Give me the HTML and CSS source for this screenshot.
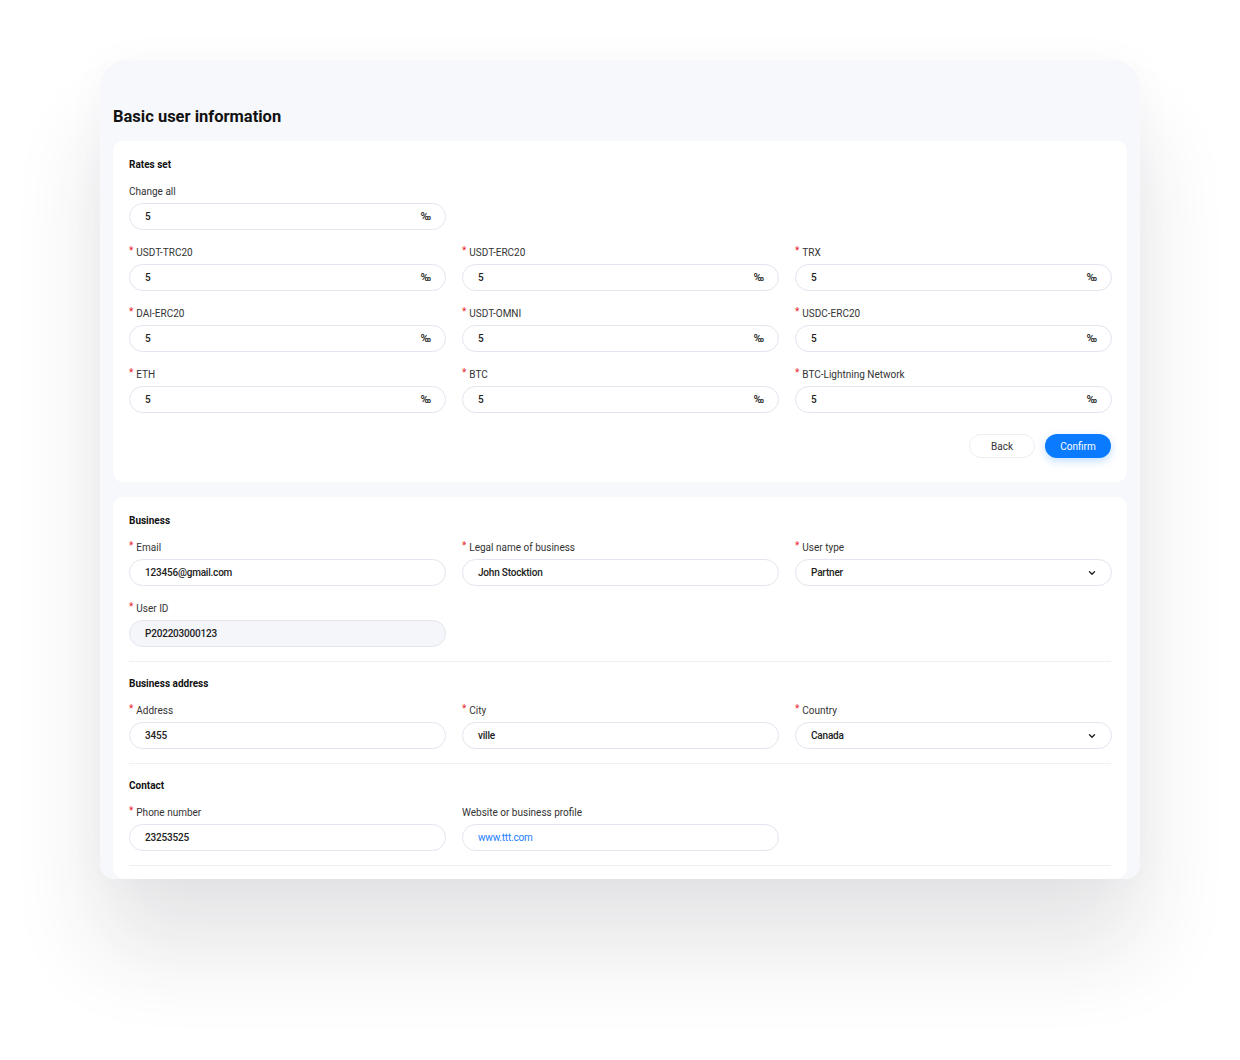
FILE: index.html
```html
<!DOCTYPE html>
<html lang="en">
<head>
<meta charset="utf-8">
<title>Basic user information</title>
<link rel="stylesheet" href="styles.css">
</head>
<body>
<div class="panel">
  <h1 class="page-title">Basic user information</h1>

  <section class="card card-rates">
    <h2 class="sec-title">Rates set</h2>
    <div class="grid">
      <div class="field">
        <label class="label">Change all</label>
        <div class="input"><span class="val">5</span><span class="unit">‰</span></div>
      </div>
    </div>
    <div class="grid grid-gap">
      <div class="field">
        <label class="label"><span class="req">*</span>USDT-TRC20</label>
        <div class="input"><span class="val">5</span><span class="unit">‰</span></div>
      </div>
      <div class="field">
        <label class="label"><span class="req">*</span>USDT-ERC20</label>
        <div class="input"><span class="val">5</span><span class="unit">‰</span></div>
      </div>
      <div class="field">
        <label class="label"><span class="req">*</span>TRX</label>
        <div class="input"><span class="val">5</span><span class="unit">‰</span></div>
      </div>
      <div class="field">
        <label class="label"><span class="req">*</span>DAI-ERC20</label>
        <div class="input"><span class="val">5</span><span class="unit">‰</span></div>
      </div>
      <div class="field">
        <label class="label"><span class="req">*</span>USDT-OMNI</label>
        <div class="input"><span class="val">5</span><span class="unit">‰</span></div>
      </div>
      <div class="field">
        <label class="label"><span class="req">*</span>USDC-ERC20</label>
        <div class="input"><span class="val">5</span><span class="unit">‰</span></div>
      </div>
      <div class="field">
        <label class="label"><span class="req">*</span>ETH</label>
        <div class="input"><span class="val">5</span><span class="unit">‰</span></div>
      </div>
      <div class="field">
        <label class="label"><span class="req">*</span>BTC</label>
        <div class="input"><span class="val">5</span><span class="unit">‰</span></div>
      </div>
      <div class="field">
        <label class="label"><span class="req">*</span>BTC-Lightning Network</label>
        <div class="input"><span class="val">5</span><span class="unit">‰</span></div>
      </div>
    </div>
    <div class="actions">
      <button class="btn btn-back">Back</button>
      <button class="btn btn-confirm">Confirm</button>
    </div>
  </section>

  <section class="card card-business">
    <h2 class="sec-title">Business</h2>
    <div class="grid">
      <div class="field">
        <label class="label"><span class="req">*</span>Email</label>
        <div class="input"><span class="val">123456@gmail.com</span></div>
      </div>
      <div class="field">
        <label class="label"><span class="req">*</span>Legal name of business</label>
        <div class="input"><span class="val">John Stocktion</span></div>
      </div>
      <div class="field">
        <label class="label"><span class="req">*</span>User type</label>
        <div class="input"><span class="val">Partner</span>
          <svg class="chev" width="8" height="6" viewBox="0 0 8 6"><path d="M1.5 1.8 L4 4.2 L6.5 1.8" fill="none" stroke="#222" stroke-width="1.4" stroke-linecap="round" stroke-linejoin="round"/></svg>
        </div>
      </div>
      <div class="field">
        <label class="label"><span class="req">*</span>User ID</label>
        <div class="input input-disabled"><span class="val">P202203000123</span></div>
      </div>
    </div>
    <hr class="divider">
    <h2 class="sec-title">Business address</h2>
    <div class="grid">
      <div class="field">
        <label class="label"><span class="req">*</span>Address</label>
        <div class="input"><span class="val">3455</span></div>
      </div>
      <div class="field">
        <label class="label"><span class="req">*</span>City</label>
        <div class="input"><span class="val">ville</span></div>
      </div>
      <div class="field">
        <label class="label"><span class="req">*</span>Country</label>
        <div class="input"><span class="val">Canada</span>
          <svg class="chev" width="8" height="6" viewBox="0 0 8 6"><path d="M1.5 1.8 L4 4.2 L6.5 1.8" fill="none" stroke="#222" stroke-width="1.4" stroke-linecap="round" stroke-linejoin="round"/></svg>
        </div>
      </div>
    </div>
    <hr class="divider">
    <h2 class="sec-title">Contact</h2>
    <div class="grid">
      <div class="field">
        <label class="label"><span class="req">*</span>Phone number</label>
        <div class="input"><span class="val">23253525</span></div>
      </div>
      <div class="field">
        <label class="label">Website or business profile</label>
        <div class="input"><span class="val link">www.ttt.com</span></div>
      </div>
    </div>
    <hr class="divider divider-last">
  </section>
</div>
</body>
</html>
```

FILE: styles.css
```css
* { box-sizing: border-box; }

html, body {
  margin: 0;
  padding: 0;
  background: #ffffff;
}

body {
  font-family: Roboto, "Liberation Sans", sans-serif;
  color: #1d1d22;
  height: 1060px;
  overflow: hidden;
}

.panel {
  width: 1040px;
  margin: 60px 0 0 100px;
  padding: 0 13px;
  background: #f7f8fc;
  border-radius: 28px 28px 14px 14px;
  overflow: hidden;
  box-shadow: 0 70px 90px rgba(40, 40, 60, 0.12), 0 0 40px rgba(40, 40, 80, 0.03);
}

.page-title {
  margin: 0;
  padding-top: 45px;
  margin-bottom: 12px;
  font-size: 16.5px;
  line-height: 24px;
  font-weight: 700;
  color: #111;
}

.card {
  background: #fff;
  border-radius: 10px;
  padding: 16px 16px 24px;
}

.card-business {
  margin-top: 15px;
  padding-bottom: 13px;
  border-radius: 10px 10px 12px 12px;
}

.sec-title {
  margin: 0 0 12px;
  font-size: 10px;
  line-height: 15px;
  font-weight: 700;
  color: #111;
}

.grid {
  display: grid;
  grid-template-columns: repeat(3, 317px);
  column-gap: 16px;
  row-gap: 15px;
}

.grid-gap {
  margin-top: 15px;
}

.field {
  display: flex;
  flex-direction: column;
}

.label {
  font-size: 10px;
  line-height: 15px;
  color: #333;
  margin-bottom: 4px;
}

.req {
  color: #e8262a;
  font-size: 10px;
  margin-right: 3px;
  position: relative;
  top: -2px;
}

.input {
  height: 27px;
  border: 1px solid #e3e4ee;
  border-radius: 14px;
  padding: 0 14px 0 15px;
  display: flex;
  align-items: center;
  justify-content: space-between;
  background: #fff;
}

.input-disabled {
  background: #f5f6fa;
}

.val {
  font-size: 10px;
  font-weight: 500;
  color: #222;
  letter-spacing: -0.2px;
}

.val.link {
  color: #1a7dff;
  font-weight: 400;
}

.unit {
  font-size: 11px;
  font-weight: 700;
  color: #333;
}

.chev {
  margin-right: 1px;
}

.actions {
  display: flex;
  justify-content: flex-end;
  gap: 10px;
  margin-top: 21px;
}

.btn {
  height: 24px;
  border-radius: 12px;
  font-family: inherit;
  font-size: 10px;
  padding: 0;
  cursor: pointer;
}

.btn-back {
  width: 66px;
  background: #fff;
  border: 1px solid #eceef3;
  color: #333;
}

.btn-confirm {
  width: 66px;
  background: #0a7bff;
  border: none;
  color: #fff;
  box-shadow: 0 3px 8px rgba(10, 123, 255, 0.25);
}

.divider {
  border: none;
  height: 1px;
  background: #eff0f4;
  margin: 14px 0 14px;
}

.divider-last {
  margin-bottom: 0;
}
```
